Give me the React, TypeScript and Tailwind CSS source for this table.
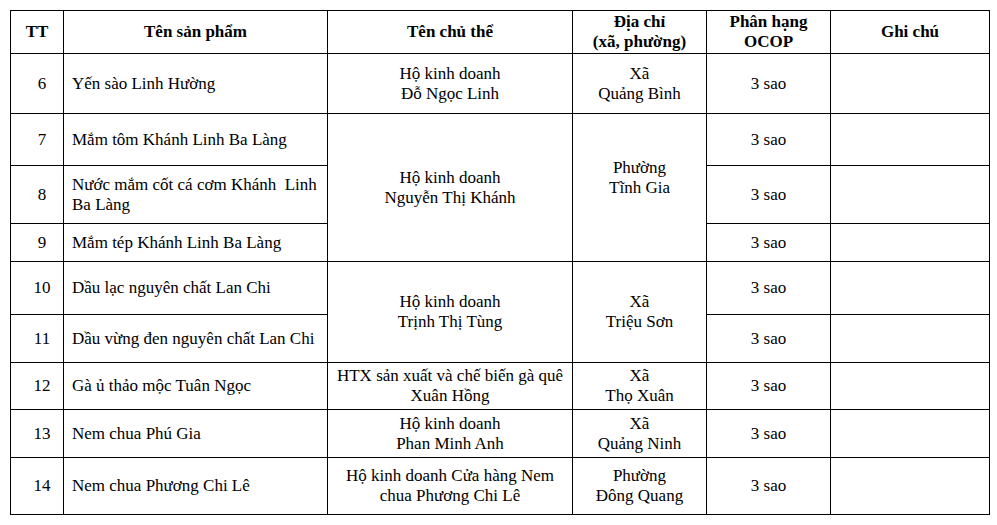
const rows = [
  { tt: "6", name: ["Yến sào Linh Hường"], h: "h-[60px]" },
  { tt: "7", name: ["Mắm tôm Khánh Linh Ba Làng"], h: "h-[52px]" },
  { tt: "8", name: ["Nước mắm cốt cá cơm Khánh  Linh", "Ba Làng"], h: "h-[58px]" },
  { tt: "9", name: ["Mắm tép Khánh Linh Ba Làng"], h: "h-[38px]" },
  { tt: "10", name: ["Dầu lạc nguyên chất Lan Chi"], h: "h-[53px]" },
  { tt: "11", name: ["Dầu vừng đen nguyên chất Lan Chi"], h: "h-[48px]" },
  { tt: "12", name: ["Gà ủ thảo mộc Tuân Ngọc"], h: "h-[47px]" },
  { tt: "13", name: ["Nem chua Phú Gia"], h: "h-[48px]" },
  { tt: "14", name: ["Nem chua Phương Chi Lê"], h: "h-[57px]" },
];

// merged cells for owner / address, keyed by row index where they start
const owners: Record<number, { span: number; owner: string[]; addr: string[]; addrPad?: boolean }> = {
  0: { span: 1, owner: ["Hộ kinh doanh", "Đỗ Ngọc Linh"], addr: ["Xã", "Quảng Bình"] },
  1: { span: 3, owner: ["Hộ kinh doanh", "Nguyễn Thị Khánh"], addr: ["Phường", "Tĩnh Gia"], addrPad: true },
  4: { span: 2, owner: ["Hộ kinh doanh", "Trịnh Thị Tùng"], addr: ["Xã", "Triệu Sơn"] },
  6: { span: 1, owner: ["HTX sản xuất và chế biến gà quê", "Xuân Hồng"], addr: ["Xã", "Thọ Xuân"] },
  7: { span: 1, owner: ["Hộ kinh doanh", "Phan Minh Anh"], addr: ["Xã", "Quảng Ninh"] },
  8: { span: 1, owner: ["Hộ kinh doanh Cửa hàng Nem", "chua Phương Chi Lê"], addr: ["Phường", "Đông Quang"] },
};

function Lines({ lines }: { lines: string[] }) {
  return (
    <>
      {lines.map((l, i) => (
        <div key={i} className="whitespace-pre">
          {l}
        </div>
      ))}
    </>
  );
}

const cell = "border border-black align-middle p-0";

export default function App() {
  return (
    <div className="bg-white w-[997px] h-[525px] pl-[10px] pt-[10px] text-black font-['Liberation_Serif',serif] text-[17px] leading-[20px]">
      <table className="border-collapse table-fixed w-[979px]">
        <colgroup>
          <col className="w-[53px]" />
          <col className="w-[264px]" />
          <col className="w-[245px]" />
          <col className="w-[134px]" />
          <col className="w-[124px]" />
          <col className="w-[159px]" />
        </colgroup>
        <thead>
          <tr className="h-[43px] font-bold text-center">
            <th className={cell}>TT</th>
            <th className={cell}>Tên sản phẩm</th>
            <th className={cell}>Tên chủ thể</th>
            <th className={cell}>
              <Lines lines={["Địa chỉ", "(xã, phường)"]} />
            </th>
            <th className={cell}>
              <Lines lines={["Phân hạng", "OCOP"]} />
            </th>
            <th className={cell}>Ghi chú</th>
          </tr>
        </thead>
        <tbody>
          {rows.map((r, i) => {
            const o = owners[i];
            return (
              <tr key={r.tt} className={r.h}>
                <td className={`${cell} text-center pl-[10px]`}>{r.tt}</td>
                <td className={`${cell} pl-[8px]`}>
                  <Lines lines={r.name} />
                </td>
                {o && (
                  <>
                    <td rowSpan={o.span} className={`${cell} text-center`}>
                      <Lines lines={o.owner} />
                    </td>
                    <td rowSpan={o.span} className={`${cell} text-center ${o.addrPad ? "pb-5" : ""}`}>
                      <Lines lines={o.addr} />
                    </td>
                  </>
                )}
                <td className={`${cell} text-center`}>3 sao</td>
                <td className={cell}></td>
              </tr>
            );
          })}
        </tbody>
      </table>
    </div>
  );
}
